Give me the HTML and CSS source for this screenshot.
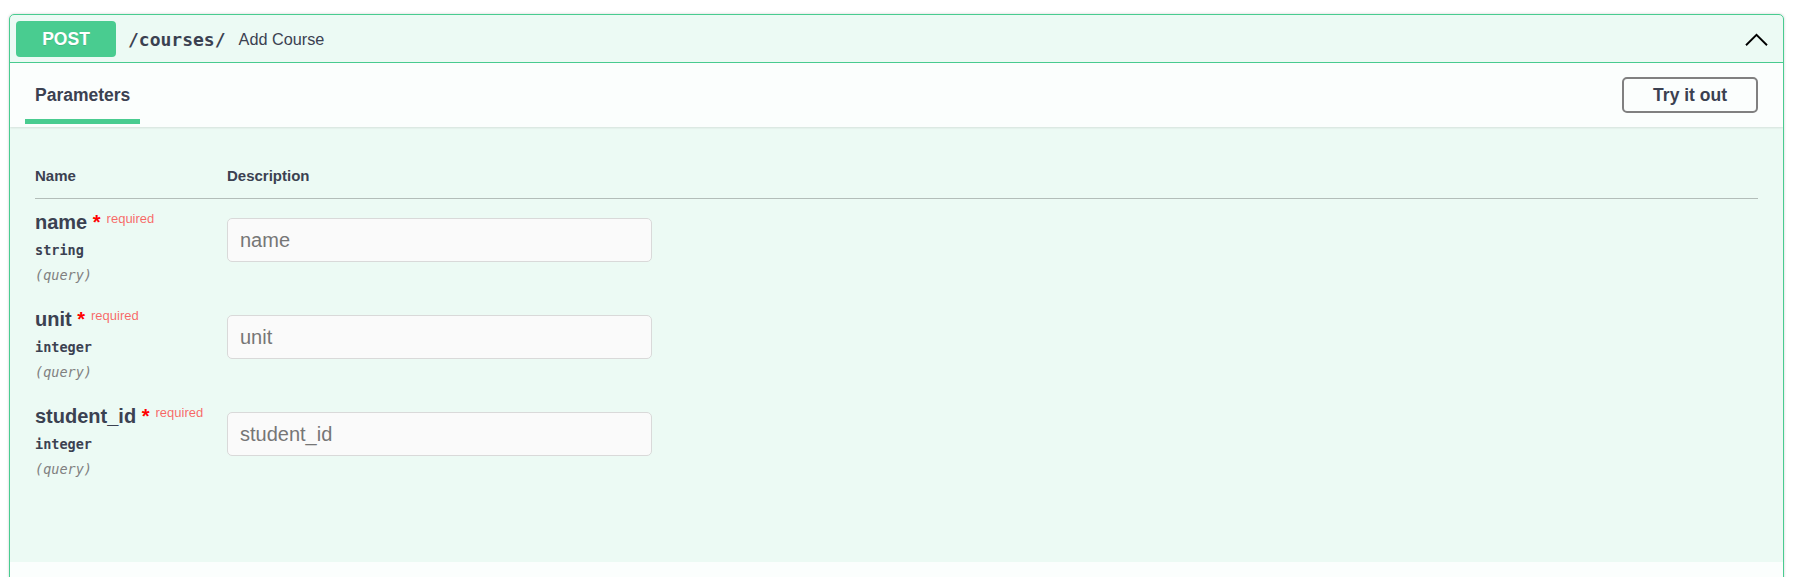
FILE: index.html
```html
<!DOCTYPE html>
<html lang="en">
<head>
<meta charset="utf-8">
<title>POST /courses/</title>
<link rel="stylesheet" href="styles.css">
</head>
<body>
<div class="opblock">
  <div class="summary">
    <span class="method">POST</span>
    <span class="path">/courses/</span>
    <span class="summary-desc">Add Course</span>
    <svg class="arrow" width="25" height="25" viewBox="0 0 20 20" aria-hidden="true">
      <polyline points="1.6,14.6 10,6.2 18.4,14.6" fill="none" stroke="#000" stroke-width="1.5"/>
    </svg>
  </div>
  <div class="section-header">
    <h4 class="tab"><span>Parameters</span></h4>
    <button class="try-out" type="button">Try it out</button>
  </div>
  <div class="table-container">
    <div class="params-head">
      <div>Name</div>
      <div>Description</div>
    </div>
    <div class="param-row">
      <div class="col-name">
        <div class="pname">name<span class="star">&nbsp;*</span><span class="req">required</span></div>
        <div class="ptype">string</div>
        <div class="pin">(query)</div>
      </div>
      <div class="col-desc"><input type="text" placeholder="name"></div>
    </div>
    <div class="param-row">
      <div class="col-name">
        <div class="pname">unit<span class="star">&nbsp;*</span><span class="req">required</span></div>
        <div class="ptype">integer</div>
        <div class="pin">(query)</div>
      </div>
      <div class="col-desc"><input type="text" placeholder="unit"></div>
    </div>
    <div class="param-row">
      <div class="col-name">
        <div class="pname">student_id<span class="star">&nbsp;*</span><span class="req">required</span></div>
        <div class="ptype">integer</div>
        <div class="pin">(query)</div>
      </div>
      <div class="col-desc"><input type="text" placeholder="student_id"></div>
    </div>
  </div>
  <div class="section-footer"></div>
</div>
</body>
</html>
```
FILE: styles.css
```css
html, body {
  margin: 0;
  padding: 0;
  background: #fff;
  font-family: "Liberation Sans", Arial, sans-serif;
  color: #3b4151;
}

.opblock {
  margin: 14px 13px 20px 9px;
  border: 1px solid #49cc90;
  border-radius: 5px;
  background: rgba(73, 204, 144, 0.1);
  box-shadow: 0 0 3px rgba(0, 0, 0, 0.19);
  overflow: hidden;
}

.summary {
  display: flex;
  align-items: center;
  padding: 6px 6px 5px 6px;
  border-bottom: 1px solid #49cc90;
}

.method {
  width: 100px;
  height: 36px;
  line-height: 36px;
  text-align: center;
  background: #49cc90;
  color: #fff;
  border-radius: 4px;
  font-size: 17.5px;
  font-weight: 700;
  text-shadow: 0 1px 0 rgba(0, 0, 0, 0.1);
}

.path {
  font-family: "DejaVu Sans Mono", "Liberation Mono", monospace;
  font-weight: 700;
  font-size: 18px;
  padding: 0 13px 0 12px;
  color: #3b4151;
}

.summary-desc {
  font-size: 16.25px;
  color: #3b4151;
  flex: 1;
}

.arrow {
  margin-right: 8px;
}

.section-header {
  display: flex;
  align-items: center;
  justify-content: space-between;
  height: 64px;
  padding: 0 25px;
  background: rgba(255, 255, 255, 0.8);
  box-shadow: 0 1px 2px rgba(0, 0, 0, 0.1);
}

.tab {
  margin: 0;
  font-size: 17.5px;
  line-height: 20px;
  font-weight: 700;
}

.tab span {
  position: relative;
  display: inline-block;
}

.tab span::after {
  content: "";
  position: absolute;
  left: -10%;
  width: 120%;
  bottom: -19px;
  height: 5px;
  background: #49cc90;
}

.try-out {
  height: 36px;
  padding: 0 29px;
  border: 2px solid #808080;
  border-radius: 5px;
  background: transparent;
  font-family: "Liberation Sans", Arial, sans-serif;
  font-size: 17.5px;
  font-weight: 700;
  color: #3b4151;
}

.table-container {
  padding: 25px 25px 72px 25px;
}

.params-head {
  display: grid;
  grid-template-columns: 192px 1fr;
  padding: 15px 0 14px 0;
  font-size: 15px;
  line-height: 17px;
  font-weight: 700;
  border-bottom: 1px solid #b3bdb9;
}

.param-row {
  display: grid;
  grid-template-columns: 192px 1fr;
  padding: 11px 0 12px 0;
}

.pname {
  font-size: 20px;
  line-height: 24px;
  height: 24px;
  font-weight: 700;
  white-space: nowrap;
}

.star {
  color: #f00;
}

.req {
  position: relative;
  top: -6px;
  padding-left: 6px;
  font-size: 13px;
  line-height: 0;
  font-weight: 400;
  color: rgba(255, 0, 0, 0.6);
}

.ptype {
  margin-top: 7px;
  font-family: "DejaVu Sans Mono", "Liberation Mono", monospace;
  font-size: 13.5px;
  line-height: 18px;
  font-weight: 700;
}

.pin {
  margin-top: 7px;
  font-family: "DejaVu Sans Mono", "Liberation Mono", monospace;
  font-size: 13.5px;
  line-height: 18px;
  font-style: italic;
  color: #808080;
}

.col-desc input {
  display: block;
  box-sizing: border-box;
  margin-top: 8px;
  width: 425px;
  height: 44px;
  padding: 0 12px;
  border: 1px solid #d9d9d9;
  border-radius: 5px;
  background: #fafafa;
  font-family: "Liberation Sans", Arial, sans-serif;
  font-size: 20px;
  color: #3b4151;
}

.col-desc input::placeholder {
  color: #767676;
}

.section-footer {
  height: 64px;
  background: rgba(255, 255, 255, 0.8);
}
```
